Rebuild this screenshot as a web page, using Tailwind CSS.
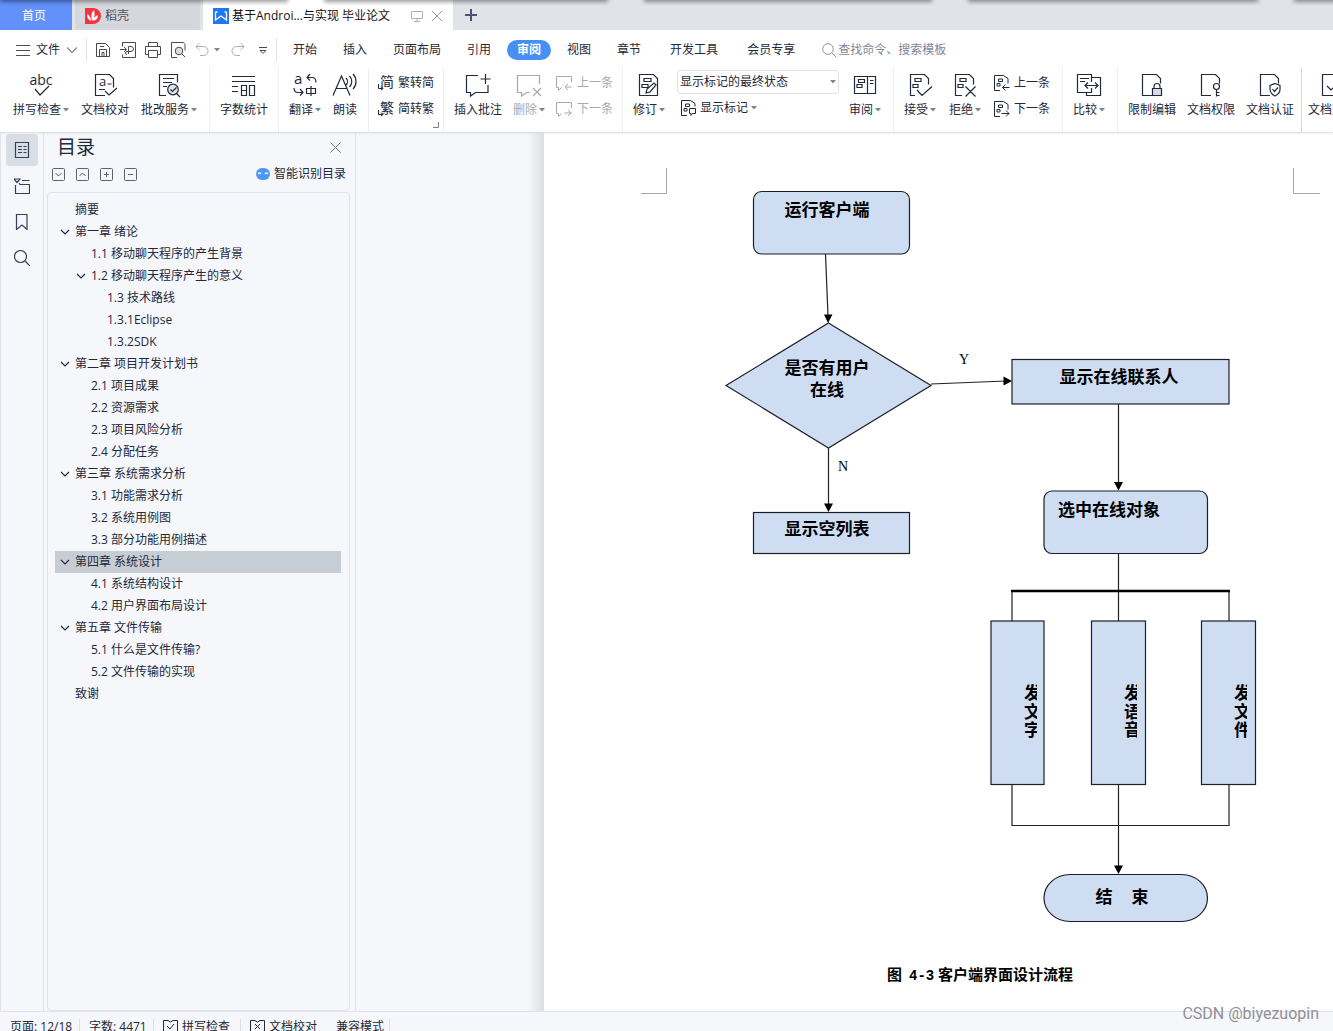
<!DOCTYPE html>
<html lang="zh-CN">
<head>
<meta charset="utf-8">
<title>基于Android 毕业论文</title>
<script src="https://cdn.jsdelivr.net/npm/@tailwindcss/browser@4"></script>
</head>
<body class="flex h-screen flex-col overflow-hidden bg-[#f5f7fa] font-['Open_Sans','Noto_Sans_CJK_SC',sans-serif] text-xs leading-4 text-[#23283a]">

<!-- Shared icon shapes -->
<svg class="hidden" aria-hidden="true">
  <symbol id="caret" viewBox="0 0 6 4"><path d="M0 0h6L3 3.6z" fill="#7a8296"/></symbol>
  <symbol id="chev" viewBox="0 0 10 10"><path d="M1 3l4 4 4-4" fill="none" stroke="currentColor" stroke-width="1.2"/></symbol>
  <symbol id="doc" viewBox="0 0 24 24"><path d="M12 22.500H2.500V1.500h14l4 4v5" /></symbol>
  <symbol id="prev" viewBox="0 0 16 16"><path d="M6 15.500H.5V.5h9l4.500 3v5M4.500 4h4v2.500h-4zM3 8.500h3V11H3zM15.500 12.500H8.500M11.500 9.500l-3 3 3 3"/></symbol>
  <symbol id="next" viewBox="0 0 16 16"><path d="M6 15.500H.5V.5h9l4.500 3v5M4.500 4h4v2.500h-4zM3 8.500h3V11H3zM7.500 12.500h7.500M12 9.500l3 3-3 3"/></symbol>
</svg>

<!-- Window tabs -->
<header class="relative flex h-[30px] shrink-0 bg-[#e1e3e8]">
  <button class="w-[72px] bg-[#6391fb] pt-[2px] pr-1 text-white">首页</button>
  <button class="ml-[3px] flex w-[125px] items-center gap-1 bg-[#d5d7dc] pt-[2px] pl-[10px] text-[#4b5160]">
    <svg class="size-4" viewBox="0 0 16 16"><path d="M0 0h8a8 8 0 0 1 0 16H0z" fill="#f5333f"/><path d="M7 13C6 8 6 5 9 2c1 4 1 7-2 11zM6 13C2 11 2 8 2.500 6 5 8 6 10 6 13zM8 13c0-3 2-5 5-6 0 3-1 5-5 6z" fill="#fff"/></svg>稻壳
  </button>
  <div class="ml-[3px] flex w-[250px] items-center bg-white pt-[2px] pl-[10px] text-[#111]">
    <svg class="mr-[3px] size-4" viewBox="0 0 16 16"><path d="M0 0h16v16H0z" fill="#1f78f0"/><path d="M2.500 4v8l5.500-4 5.500 4V4M2.500 4h2M11.500 4h2" fill="none" stroke="#fff" stroke-width="1.300"/></svg>
    <button class="w-[179px] text-left whitespace-nowrap">基于Androi...与实现 毕业论文</button>
    <svg class="size-3 shrink-0" viewBox="0 0 12 12" fill="none" stroke="#a7b0c2"><path d="M.5 1.500h11v7H.5zM6 8.500v3M3 11.500h6"/></svg>
    <button aria-label="关闭标签" class="ml-2"><svg class="size-3" viewBox="0 0 12 12" fill="none" stroke="#8f99ad"><path d="M1 1l10 10M11 1L1 11"/></svg></button>
  </div>
  <button aria-label="新建标签" class="ml-3"><svg class="size-3" viewBox="0 0 12 12" fill="none" stroke="#4a5470" stroke-width="2"><path d="M6 0v12M0 6h12"/></svg></button>
  <div class="absolute inset-x-0 top-0 h-[6px] overflow-hidden">
    <div class="-mt-1 flex gap-[36px] opacity-40 blur-[2px]">
      <i class="h-[6px] w-[288px] shrink-0 bg-black"></i><i class="h-[6px] w-[284px] shrink-0 bg-black"></i><i class="h-[6px] w-[288px] shrink-0 bg-black"></i><i class="h-[6px] w-[290px] shrink-0 bg-black"></i><i class="h-[6px] w-[60px] shrink-0 bg-black"></i>
    </div>
  </div>
</header>

<!-- Menu bar -->
<nav class="flex h-[38px] shrink-0 items-center bg-white pt-[2px] pl-4">
  <button class="flex items-center gap-[6px]">
    <svg class="h-[11px] w-[14px]" viewBox="0 0 14 11" stroke="#4a4f5c"><path d="M0 .5h14M0 5.500h14M0 10.500h14"/></svg>文件
    <svg class="size-3 text-[#8a90a0]"><use href="#chev"/></svg>
  </button>
  <div class="ml-2 flex h-6 items-center gap-[9px] border-x border-[#dfe1e6] pr-2 pl-2 text-[#4a4a4a]">
    <button aria-label="保存"><svg class="size-4" viewBox="0 0 16 16" fill="none" stroke="currentColor"><path d="M1.500 1.500h9l4 4v9h-13zM4.500 14.500v-7h7v7M5 4.500h4M7 14.500v-4h2v4"/></svg></button>
    <button aria-label="输出PDF"><svg class="size-4" viewBox="0 0 16 16" fill="none" stroke="currentColor"><path d="M2.500 4.500v-4h13v15h-13v-3M0 7.500h6M4 5l2.500 2.500L4 10M8.500 12V4.500h2.500a2 2 0 0 1 0 5H7a1.500 1.500 0 0 0 0 3"/></svg></button>
    <button aria-label="打印"><svg class="size-4" viewBox="0 0 16 16" fill="none" stroke="currentColor"><path d="M3.500 4.500v-4h9v4M3.500 12.500h-3v-8h15v8h-3M3.500 8.500h9v7h-9z"/></svg></button>
    <button aria-label="打印预览"><svg class="size-4" viewBox="0 0 16 16" fill="none" stroke="currentColor"><path d="M7 15.500H1.500V.5h12l1.500 2v6"/><circle cx="9" cy="9" r="3.800" fill="#ddd"/><path d="M12 12l3 3"/></svg></button>
    <button aria-label="撤销" class="flex items-center gap-[5px] text-[#a9adb5]"><svg class="h-4 w-[14px]" viewBox="0 0 14 16" fill="none" stroke="currentColor"><path d="M4.500 1L1 4.500 4.500 8M1 4.500h7.500a4.500 4.500 0 0 1 0 9H5"/></svg><svg class="h-1 w-[6px]"><use href="#caret"/></svg></button>
    <button aria-label="恢复" class="ml-[2px] text-[#a9adb5]"><svg class="h-4 w-[14px]" viewBox="0 0 14 16" fill="none" stroke="currentColor"><path d="M9.500 1L13 4.500 9.500 8M13 4.500H5.500a4.500 4.500 0 0 0 0 9H9"/></svg></button>
    <button aria-label="更多" class="ml-1"><svg class="size-[10px]" viewBox="0 0 10 10" fill="none" stroke="currentColor"><path d="M1 2.500h8M2 5.500h6L5 8.500z"/></svg></button>
  </div>
  <div class="ml-4 flex shrink-0 items-center gap-[26px]">
    <button>开始</button><button>插入</button><button>页面布局</button><button>引用</button>
    <button class="-mx-[10px] h-5 w-11 rounded-full bg-[#458ff5] font-bold text-white">审阅</button>
    <button>视图</button><button>章节</button>
  </div>
  <div class="ml-[29px] flex shrink-0 items-center gap-[29px]">
    <button>开发工具</button><button>会员专享</button>
    <label class="-ml-[2px] flex items-center gap-[2px]">
      <svg class="size-[14px]" viewBox="0 0 14 14" fill="none" stroke="#8d96ab"><circle cx="6" cy="6" r="5.300"/><path d="M10 10l4 4"/></svg>
      <input aria-label="查找" class="w-32 placeholder:text-[#7d869c] placeholder:opacity-100" placeholder="查找命令、搜索模板">
    </label>
  </div>
</nav>

<!-- Review ribbon -->
<section class="z-10 flex h-16 shrink-0 overflow-hidden bg-white whitespace-nowrap shadow-[0_1px_2px_#d5d8de] [&_svg]:shrink-0 [&_svg]:overflow-visible">
  <div class="flex w-[210px] shrink-0 gap-3 border-r border-[#eceef2] pt-[5px] pl-[13px]">
    <button class="flex h-[45px] flex-col items-center justify-between"><svg class="size-6" viewBox="0 0 24 24" fill="none" stroke="currentColor" stroke-width="1.200"><text x="12" y="12" text-anchor="middle" font-size="14" fill="currentColor" stroke="none">abc</text><path d="M6 16l5 6 9-9"/></svg><span class="flex items-center gap-[2px]">拼写检查<svg class="h-1 w-[6px]"><use href="#caret"/></svg></span></button>
    <button class="flex h-[45px] flex-col items-center justify-between"><svg class="size-6" viewBox="0 0 24 24" fill="none" stroke="currentColor" stroke-width="1.200"><path d="M12 22.500H2.500V1.500h14l4 4v9M6 16.500h6M14.500 11h4M12 18l4 4 8-7"/><text x="6" y="13" font-size="13" fill="currentColor" stroke="none">a</text></svg>文档校对</button>
    <button class="flex h-[45px] flex-col items-center justify-between"><svg class="size-6" viewBox="0 0 24 24" fill="none" stroke="currentColor" stroke-width="1.200"><path d="M9 22.500H2.500V1.500h18v8M6 5.500h11M6 9.500h9M6 13.500h4M19 20l4 4"/><circle cx="16" cy="16.500" r="5.300" fill="#dfe3ea"/><path d="M13.500 16.500l2 2 4-4"/></svg><span class="flex items-center gap-[2px]">批改服务<svg class="h-1 w-[6px]"><use href="#caret"/></svg></span></button>
  </div>
  <div class="flex w-[69px] shrink-0 border-r border-[#eceef2] pt-[5px] pl-[10px]">
    <button class="flex h-[45px] flex-col items-center justify-between"><svg class="size-6" viewBox="0 0 24 24" fill="none" stroke="currentColor" stroke-width="1.200"><path d="M0 3.500h23M0 8.500h23M0 13.500h6M0 18.500h6M9.500 12.500h5v10h-5zM9.500 17.500h5M17.500 12.500h5v10h-5z"/></svg>字数统计</button>
  </div>
  <div class="flex w-[90px] shrink-0 gap-3 border-r border-[#eceef2] pt-[5px] pl-[10px]">
    <button class="flex h-[45px] flex-col items-center justify-between"><svg class="size-6" viewBox="0 0 24 24" fill="none" stroke="currentColor" stroke-width="1.200"><text x="1" y="11" font-size="15" fill="currentColor" stroke="none">a</text><path d="M17 1l-3 3.500 3 3M14 4.500h5c3 0 4 2 4 5M1 15c0 3 1 4.500 4 4.500h4M7 16l3 3.500-3 3M13.500 15.500h9v5h-9zM18 13v10"/></svg><span class="flex items-center gap-[2px]">翻译<svg class="h-1 w-[6px]"><use href="#caret"/></svg></span></button>
    <button class="flex h-[45px] flex-col items-center justify-between"><svg class="size-6" viewBox="0 0 24 24" fill="none" stroke="currentColor" stroke-width="1.200"><path d="M0 22.500L8.500 3 17 22.500M3 15.500h11M13 5c2 2 2 5 0 7M16.500 3c3 3 3 8 0 11M20 1c4 4 4 11 0 15"/></svg>朗读</button>
  </div>
  <div class="relative flex w-[75px] shrink-0 flex-col gap-[10px] border-r border-[#eceef2] pt-[7px] pl-[9px]">
    <button class="flex items-center gap-1"><svg class="size-4" viewBox="0 0 16 16"><text x="2" y="12" font-size="14" fill="currentColor">简</text><path d="M.5 9v4.500h4M3 11.500l2 2-2 1.500" fill="none" stroke="currentColor"/></svg>繁转简</button>
    <button class="flex items-center gap-1"><svg class="size-4" viewBox="0 0 16 16"><text x="2" y="12" font-size="14" fill="currentColor">繁</text><path d="M.5 9v4.500h4M3 11.500l2 2-2 1.500" fill="none" stroke="currentColor"/></svg>简转繁</button>
    <svg class="absolute right-1 bottom-1 size-[6px]" viewBox="0 0 6 6" fill="none" stroke="#7a8296"><path d="M5.500 0v5.500H0"/></svg>
  </div>
  <div class="flex w-[179px] shrink-0 gap-[11px] border-r border-[#eceef2] pt-[5px] pl-[10px]">
    <button class="flex h-[45px] flex-col items-center justify-between"><svg class="size-6" viewBox="0 0 24 24" fill="none" stroke="currentColor" stroke-width="1.200"><path d="M12 2.500H.5v17h4v3.500l5-3.500h12.500V12M19.500 1v10M14.500 6h10"/></svg>插入批注</button>
    <button class="flex h-[45px] flex-col items-center justify-between text-[#a6a9b0]"><svg class="size-6" viewBox="0 0 24 24" fill="none" stroke="currentColor" stroke-width="1.200"><path d="M22.500 11V2.500H.5v17h4v3.500l5-3.500h3M16 15l8 8M24 15l-8 8"/></svg><span class="flex items-center gap-[2px]">删除<svg class="h-1 w-[6px]"><use href="#caret"/></svg></span></button>
    <div class="flex flex-col gap-[10px] pt-[2px] text-[#a6a9b0]">
      <button class="flex items-center gap-[5px]"><svg class="size-4" viewBox="0 0 16 16" fill="none" stroke="currentColor"><path d="M15.500 7V1.500H.5v11h2v3l3-3M15.500 12h-6M12 9l-3 3 3 3"/></svg>上一条</button>
      <button class="flex items-center gap-[5px]"><svg class="size-4" viewBox="0 0 16 16" fill="none" stroke="currentColor"><path d="M15.500 7V1.500H.5v11h2v3l3-3M8.500 12h7M12 9l3 3-3 3"/></svg>下一条</button>
    </div>
  </div>
  <div class="flex w-[271px] shrink-0 border-r border-[#eceef2] pt-[5px] pl-[10px]">
    <button class="flex h-[45px] flex-col items-center justify-between"><svg class="size-6" viewBox="0 0 24 24" fill="none" stroke="currentColor" stroke-width="1.200"><path d="M2.500 1.500h14l4 4v17h-18zM7 5.500h7v3H7zM5 11.500h6v3H5zM9 20l1-4 7-6 2 2-6 7z"/></svg><span class="flex items-center gap-[2px]">修订<svg class="h-1 w-[6px]"><use href="#caret"/></svg></span></button>
    <div class="-mt-[3px] ml-3 flex w-[162px] flex-col gap-[6px]">
      <div class="flex items-center rounded-sm border border-[#dfe1e6] pr-[2px]">
        <select aria-label="标记状态" class="h-[22px] flex-1 appearance-none pl-[2px]"><option>显示标记的最终状态</option></select>
        <svg class="h-1 w-[6px]"><use href="#caret"/></svg>
      </div>
      <button class="flex items-center gap-[3px] pl-1"><svg class="size-4" viewBox="0 0 16 16" fill="none" stroke="currentColor"><path d="M6 15.500H.5V.5h9l4.500 3v3M4.500 4h4v2.500h-4zM3 8.500h3V11H3zM8.500 8.500h6v5h-3l-1.500 2v-2H8.500z"/></svg>显示标记<svg class="h-1 w-[6px]"><use href="#caret"/></svg></button>
    </div>
    <button class="ml-[10px] flex h-[45px] flex-col items-center justify-between"><svg class="size-6" viewBox="0 0 24 24" fill="none" stroke="currentColor" stroke-width="1.200"><path d="M1.500 3.500h21v17h-21zM14.500 3.500v17M5.500 6.500h6v3h-6zM4 11.500h5v3H4zM17 7.500h3.500M17 10.500h3.500"/></svg><span class="flex items-center gap-[2px]">审阅<svg class="h-1 w-[6px]"><use href="#caret"/></svg></span></button>
  </div>
  <div class="flex w-[169px] shrink-0 gap-[13px] border-r border-[#eceef2] pt-[5px] pl-[10px]">
    <button class="flex h-[45px] flex-col items-center justify-between"><svg class="size-6" viewBox="0 0 24 24" fill="none" stroke="currentColor" stroke-width="1.200"><path d="M7 22.500H2.500V1.500h14l4 4v6M7 5.500h6v3H7zM5 11.500h5v3H5zM9 17l5 5.500 10-9"/></svg><span class="flex items-center gap-[2px]">接受<svg class="h-1 w-[6px]"><use href="#caret"/></svg></span></button>
    <button class="flex h-[45px] flex-col items-center justify-between"><svg class="size-6" viewBox="0 0 24 24" fill="none" stroke="currentColor" stroke-width="1.200"><path d="M9 22.500H2.500V1.500h14l4 4v6M7 5.500h6v3H7zM5 11.500h5v3H5zM12.500 13.500l10 10M22.500 13.500l-10 10"/></svg><span class="flex items-center gap-[2px]">拒绝<svg class="h-1 w-[6px]"><use href="#caret"/></svg></span></button>
    <div class="flex flex-col gap-[10px] pt-[2px]">
      <button class="flex items-center gap-1"><svg class="size-4" fill="none" stroke="currentColor"><use href="#prev"/></svg>上一条</button>
      <button class="flex items-center gap-1"><svg class="size-4" fill="none" stroke="currentColor"><use href="#next"/></svg>下一条</button>
    </div>
  </div>
  <div class="flex w-[55px] shrink-0 border-r border-[#eceef2] pt-[5px] pl-[10px]">
    <button class="flex h-[45px] flex-col items-center justify-between"><svg class="size-6" viewBox="0 0 24 24" fill="none" stroke="currentColor" stroke-width="1.200"><path d="M14.500 9V1.500H.5v18h14V15M14.500 4.500h9v18h-14v-3M3 5.500h9M3 8.500h5M8 12.500h13M11 9.500l-3 3 3 3M18 9.500l3 3-3 3"/></svg><span class="flex items-center gap-[2px]">比较<svg class="h-1 w-[6px]"><use href="#caret"/></svg></span></button>
  </div>
  <div class="flex w-[184px] shrink-0 gap-[11px] border-r border-[#d5d8df] pt-[5px] pl-[10px]">
    <button class="flex h-[45px] flex-col items-center justify-between"><svg class="size-6" viewBox="0 0 24 24" fill="none" stroke="currentColor" stroke-width="1.200"><use href="#doc"/><path d="M12.500 15.500h9v7h-9z" fill="#d9dce3"/><path d="M14 15.500v-2a3 3 0 0 1 6 0v2"/></svg>限制编辑</button>
    <button class="flex h-[45px] flex-col items-center justify-between"><svg class="size-6" viewBox="0 0 24 24" fill="none" stroke="currentColor" stroke-width="1.200"><use href="#doc"/><circle cx="17.500" cy="13.500" r="3"/><path d="M17.500 16.500v7M17.500 19.500h3M17.500 22.500h3"/></svg>文档权限</button>
    <button class="flex h-[45px] flex-col items-center justify-between"><svg class="size-6" viewBox="0 0 24 24" fill="none" stroke="currentColor" stroke-width="1.200"><use href="#doc"/><path d="M17 10.500l5 2v4c0 3-2 5-5 6.500-3-1.500-5-3.500-5-6.500v-4zM14.500 16l2 2.500 3.500-4"/></svg>文档认证</button>
  </div>
  <div class="shrink-0 pt-[5px] pl-[6px]">
    <button class="flex h-[45px] flex-col items-center justify-between"><svg class="size-6" viewBox="0 0 24 24" fill="none" stroke="currentColor" stroke-width="1.200"><path d="M21 22.500H2.500V1.500h18v21M7 13l4 4 8-8"/></svg>文档定稿</button>
  </div>
</section>

<main class="flex min-h-0 flex-1 border-b border-[#dfe2e8]">
  <!-- Navigation rail -->
  <aside class="flex w-11 shrink-0 flex-col items-center gap-1 border-x border-[#e0e3ea] pt-[2px] text-[#35405c]">
    <button aria-label="目录" class="grid size-8 place-items-center rounded-sm bg-[#d9dde4]"><svg class="size-4" viewBox="0 0 16 16" fill="none" stroke="currentColor" stroke-width="1.200"><path d="M1.500.5h13v15h-13zM4 4.500h4M9.500 4.500h3M4 7.500h4M9.500 7.500h3M4 10.500h4M9.500 10.500h3"/></svg></button>
    <button aria-label="章节" class="grid size-8 place-items-center"><svg class="size-4" viewBox="0 0 16 16" fill="none" stroke="currentColor" stroke-width="1.200"><path d="M0 1h6L3 4.500zM8 2.500h7.500M1.500 7v8.500h14v-9H6l-1-1.500"/></svg></button>
    <button aria-label="书签" class="grid size-8 place-items-center"><svg class="size-4" viewBox="0 0 16 16" fill="none" stroke="currentColor" stroke-width="1.200"><path d="M2.500.5h10.500v15L8 11l-5.500 4.500z"/></svg></button>
    <button aria-label="查找" class="grid size-8 place-items-center"><svg class="size-4" viewBox="0 0 16 16" fill="none" stroke="currentColor" stroke-width="1.200"><circle cx="6.500" cy="6.500" r="6"/><path d="M11 11l5 5"/></svg></button>
  </aside>

  <!-- Table of contents -->
  <section class="flex w-[312px] shrink-0 flex-col border-r border-[#e0e3ea] pr-[5px] pl-[3px]">
    <div class="flex h-[30px] items-center justify-between pr-[9px] pl-[10px]">
      <h2 class="text-[19px] leading-7">目录</h2>
      <button aria-label="关闭"><svg class="size-[11px]" viewBox="0 0 11 11" stroke="#6b7283"><path d="M.5.5l10 10M10.500.5l-10 10"/></svg></button>
    </div>
    <div class="flex h-[30px] items-center gap-[11px] pb-[6px] pl-[5px] text-[#5c6370]">
      <button aria-label="展开"><svg class="size-[13px]" viewBox="0 0 13 13" fill="none" stroke="currentColor"><rect x=".5" y=".5" width="12" height="12" rx="1"/><path d="M3.500 5l3 3 3-3"/></svg></button>
      <button aria-label="收起"><svg class="size-[13px]" viewBox="0 0 13 13" fill="none" stroke="currentColor"><rect x=".5" y=".5" width="12" height="12" rx="1"/><path d="M3.500 8l3-3 3 3"/></svg></button>
      <button aria-label="增加"><svg class="size-[13px]" viewBox="0 0 13 13" fill="none" stroke="currentColor"><rect x=".5" y=".5" width="12" height="12" rx="1"/><path d="M4 6.500h5M6.500 4v5"/></svg></button>
      <button aria-label="减少"><svg class="size-[13px]" viewBox="0 0 13 13" fill="none" stroke="currentColor"><rect x=".5" y=".5" width="12" height="12" rx="1"/><path d="M4 6.500h5"/></svg></button>
      <button class="mr-1 ml-auto flex items-center gap-1 text-[#23283a]"><svg class="h-3 w-[14px]" viewBox="0 0 14 12"><rect width="14" height="12" rx="6" fill="#4a97f5"/><path d="M2 6c1-1.500 2-1.500 3 0M9 6c1-1.500 2-1.500 3 0" fill="none" stroke="#fff" stroke-width="1.200"/></svg>智能识别目录</button>
    </div>
    <ul class="flex-1 rounded-sm border border-[#e0e3ea] pt-[6px] pr-2 pl-[7px] *:flex *:h-[22px] *:items-center [&_svg]:mr-[5px] [&_svg]:ml-[5px] [&_svg]:size-[10px]">
      <li class="pl-5"><a href="#">摘要</a></li>
      <li><svg><use href="#chev"/></svg><a href="#">第一章 绪论</a></li>
      <li class="pl-9"><a href="#">1.1 移动聊天程序的产生背景</a></li>
      <li class="pl-4"><svg><use href="#chev"/></svg><a href="#">1.2 移动聊天程序产生的意义</a></li>
      <li class="pl-[52px]"><a href="#">1.3 技术路线</a></li>
      <li class="pl-[52px]"><a href="#">1.3.1Eclipse</a></li>
      <li class="pl-[52px]"><a href="#">1.3.2SDK</a></li>
      <li><svg><use href="#chev"/></svg><a href="#">第二章 项目开发计划书</a></li>
      <li class="pl-9"><a href="#">2.1 项目成果</a></li>
      <li class="pl-9"><a href="#">2.2 资源需求</a></li>
      <li class="pl-9"><a href="#">2.3 项目风险分析</a></li>
      <li class="pl-9"><a href="#">2.4 分配任务</a></li>
      <li><svg><use href="#chev"/></svg><a href="#">第三章 系统需求分析</a></li>
      <li class="pl-9"><a href="#">3.1 功能需求分析</a></li>
      <li class="pl-9"><a href="#">3.2 系统用例图</a></li>
      <li class="pl-9"><a href="#">3.3 部分功能用例描述</a></li>
      <li class="bg-[#c6cdd5]"><svg><use href="#chev"/></svg><a href="#">第四章 系统设计</a></li>
      <li class="pl-9"><a href="#">4.1 系统结构设计</a></li>
      <li class="pl-9"><a href="#">4.2 用户界面布局设计</a></li>
      <li><svg><use href="#chev"/></svg><a href="#">第五章 文件传输</a></li>
      <li class="pl-9"><a href="#">5.1 什么是文件传输?</a></li>
      <li class="pl-9"><a href="#">5.2 文件传输的实现</a></li>
      <li class="pl-5"><a href="#">致谢</a></li>
    </ul>
  </section>

  <!-- Document page with the flowchart -->
  <div class="ml-[172px] w-4 shrink-0 bg-linear-to-r from-[#f5f7fa] to-[#dcdfe2]"></div>
  <article class="min-w-0 flex-1 overflow-hidden bg-white">
    <svg class="block h-full w-full font-['Liberation_Serif','Noto_Sans_CJK_SC',serif] text-[17px] font-bold" fill="#000">
      <g transform="translate(-544 -132)">
        <path d="M641 193.500h25.500V168M1293.500 168v25.500H1320" fill="none" stroke="#a8a8a8"/>
        <g fill="#cfddf2" stroke="#1c1f26" stroke-width="1.200">
          <rect x="753.500" y="191.500" width="156" height="62.500" rx="8"/>
          <path d="M828.500 323L931 385.500 828.500 448 726 385.500z"/>
          <rect x="753.500" y="512.500" width="156" height="41"/>
          <rect x="1012" y="359.500" width="217" height="44.500"/>
          <rect x="1044" y="491" width="163.500" height="62.500" rx="8"/>
          <rect x="991" y="621" width="53" height="163.500"/>
          <rect x="1091.500" y="621" width="54" height="163.500"/>
          <rect x="1201.500" y="621" width="54" height="163.500"/>
          <rect x="1044" y="874.500" width="163.500" height="47" rx="26"/>
        </g>
        <path d="M825.500 254L828 316M828.500 448v58M931 384l75-3M1118.500 404v80M1118.500 554v67M1012 591v30M1229 591v30M1012 785v40.500h217V785M1118.500 785v82" fill="none" stroke="#222" stroke-width="1.200"/>
        <path d="M1011 591h219" stroke="#000" stroke-width="2.400"/>
        <path d="M824 314.500h8.500l-4.500 8.500zM824 503.500h9l-4.500 8.500zM1003.500 376.500v9l8.500-4.500zM1114 482h9l-4.500 8.500zM1114 865.500h9l-4.500 8.500z"/>
        <g text-anchor="middle">
          <text x="827" y="216">运行客户端</text>
          <text x="827" y="374">是否有用户</text>
          <text x="827" y="396">在线</text>
          <text x="827" y="535">显示空列表</text>
          <text x="1119" y="383">显示在线联系人</text>
          <text x="1109" y="516">选中在线对象</text>
          <text x="1104" y="903">结</text>
          <text x="1140" y="903">束</text>
        </g>
        <g class="text-sm font-normal"><text x="959" y="364">Y</text><text x="838" y="471">N</text></g>
        <clipPath id="cells"><path d="M991 621h46v163h-46zM1091 621h46v163h-46zM1201 621h46v163h-46z"/></clipPath>
        <g clip-path="url(#cells)">
          <text y="699"><tspan x="1024">发</tspan><tspan x="1024" dy="19">文</tspan><tspan x="1024" dy="18">字</tspan></text>
          <text y="699"><tspan x="1124">发</tspan><tspan x="1124" dy="19">语</tspan><tspan x="1124" dy="18">音</tspan></text>
          <text y="699"><tspan x="1234">发</tspan><tspan x="1234" dy="19">文</tspan><tspan x="1234" dy="18">件</tspan></text>
        </g>
        <g class="text-[15px]"><text x="887" y="980">图</text><text x="909" y="980" class="font-['Liberation_Mono',monospace] text-sm">4-3</text><text x="938" y="980">客户端界面设计流程</text></g>
      </g>
    </svg>
  </article>
</main>

<!-- Status bar -->
<footer class="relative h-[19px] shrink-0">
  <div class="h-full overflow-hidden">
    <div class="flex h-[30px] items-center whitespace-nowrap *:flex *:h-4 *:items-center *:gap-1 *:border-[#dcdfe6]">
      <span class="w-20 border-r pl-[10px]">页面: 12/18</span>
      <span class="w-[74px] border-r pl-[9px]">字数: 4471</span>
      <button class="w-[87px] border-r pl-[9px]"><svg class="h-4 w-[15px]" viewBox="0 0 15 16" fill="none" stroke="currentColor"><path d="M5 1.500H.5v14h14v-14H10L7.500 3zM4 7l3 3 4-5"/></svg>拼写检查</button>
      <button class="w-[86px] pl-[9px]"><svg class="h-4 w-[15px]" viewBox="0 0 15 16" fill="none" stroke="currentColor"><path d="M5 1.500H.5v14h14v-14H10L7.500 3zM5 5l5 5M10 5l-5 5"/></svg>文档校对</button>
      <span class="w-[63px] border-r pl-[9px]">兼容模式</span>
    </div>
  </div>
  <p class="absolute right-[14px] bottom-[9px] font-[Roboto,sans-serif] text-base leading-4 text-[#909194]">CSDN @biyezuopin</p>
</footer>
</body>
</html>
